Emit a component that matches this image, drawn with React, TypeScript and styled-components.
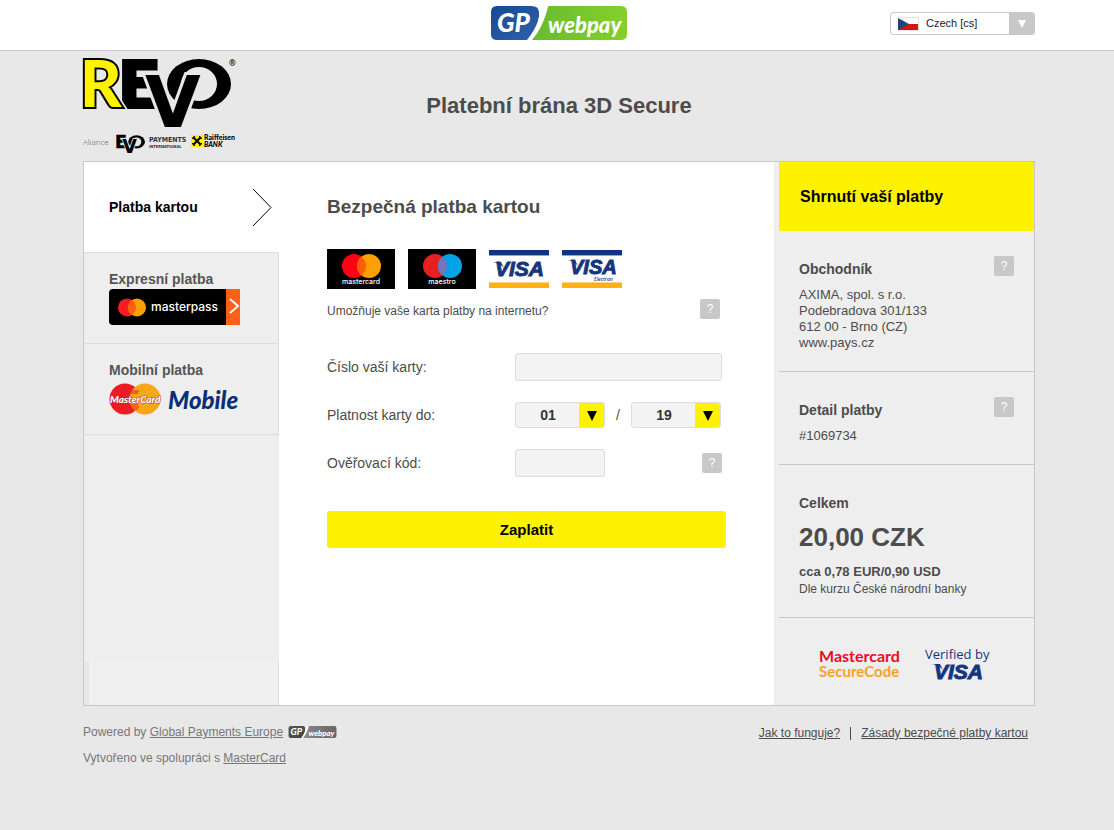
import React from "react";
import styled, { createGlobalStyle } from "styled-components";

const GlobalStyle = createGlobalStyle`
  * { box-sizing: border-box; }
  body {
    margin: 0;
    background: #e8e8e8;
    color: #4c4c4c;
    font-family: "Liberation Sans", Arial, Helvetica, sans-serif;
    font-size: 13px;
    line-height: 16px;
  }
  h1, h2, h3, p { margin: 0; }
  button, input, select { font-family: inherit; color: inherit; }
  svg { display: block; overflow: visible; }
`;

const Container = styled.div`
  max-width: 952px;
  margin: 0 auto;
`;

const Page = styled.div`
  padding-left: 4px;
`;

const TopBar = styled.div`
  background: #fff;
  border-bottom: 1px solid #c8c8c8;
  padding-left: 4px;
`;

const TopBarInner = styled(Container)`
  height: 50px;
  display: grid;
  grid-template-columns: 1fr auto 1fr;
  align-items: center;
  padding-bottom: 4px;
`;

const LanguageBox = styled.label`
  grid-column: 3;
  justify-self: end;
  width: 145px;
  height: 23px;
  display: grid;
  grid-template-columns: 35px 1fr 25px;
  align-items: center;
  border: 1px solid #c8c8c8;
  border-radius: 3px;
  background: #fff;
  overflow: hidden;
`;

const FlagSlot = styled.span`
  grid-area: 1 / 1;
  padding: 1px 0 0 7px;
  z-index: 1;
  pointer-events: none;
`;

const LanguageSelect = styled.select`
  grid-area: 1 / 1 / 2 / 4;
  width: 100%;
  height: 21px;
  appearance: none;
  border: 0;
  background: transparent;
  padding: 0 26px 0 35px;
  font-size: 11px;
  color: #222;
`;

const SelectArrow = styled.span<{ $bg: string; $color: string }>`
  align-self: stretch;
  display: flex;
  align-items: center;
  justify-content: center;
  padding-top: 2px;
  background: ${(p) => p.$bg};
  color: ${(p) => p.$color};
  pointer-events: none;
  z-index: 1;
`;

const LanguageArrow = styled(SelectArrow)`
  grid-area: 1 / 3;
`;

const Header = styled(Container)`
  height: 110px;
  display: grid;
  grid-template-columns: 1fr auto 1fr;
  padding-top: 7px;
`;

const PageTitle = styled.h1`
  font-size: 22px;
  line-height: 26px;
  padding-top: 35px;
`;

const Panel = styled(Container)`
  display: grid;
  grid-template-columns: 195px 1fr 260px;
  border: 1px solid #c8c8c8;
  background: #fff;
`;

const Nav = styled.nav`
  display: flex;
  flex-direction: column;
  background: #eee;
`;

const ActiveMethod = styled.button`
  height: 90px;
  display: flex;
  align-items: center;
  justify-content: space-between;
  border: 0;
  background: #fff;
  padding: 0 6px 0 25px;
  font-size: 14px;
  font-weight: bold;
  color: #000;
`;

const Method = styled.button<{ $last?: boolean }>`
  display: flex;
  flex-direction: column;
  align-items: flex-start;
  gap: 1px;
  border: 0 solid #ddd;
  border-width: 1px 1px ${(p) => (p.$last ? "1px" : "0")} 0;
  background: #eee;
  padding: 17px 25px 18px;
  font-size: 14px;
  line-height: 18px;
  font-weight: bold;
  color: #555;
`;

const NavFoot = styled.div`
  margin-top: auto;
  height: 44px;
  background: #f0f0f0;
  border-left: 5px solid #e8e8e8;
  border-right: 1px solid #ddd;
`;

const Main = styled.main`
  padding: 33px 48px;
`;

const SectionTitle = styled.h2`
  font-size: 19px;
  line-height: 24px;
`;

const Cards = styled.div`
  display: flex;
  align-items: center;
  gap: 13px;
  margin-top: 30px;
`;

const Question = styled.div`
  display: flex;
  align-items: flex-end;
  justify-content: space-between;
  margin-top: 10px;
  padding-right: 6px;
  font-size: 12px;
`;

const Help = styled.button`
  width: 20px;
  height: 20px;
  flex: none;
  border: 0;
  border-radius: 2px;
  padding: 0;
  background: #c8c8c8;
  color: #fff;
  font-size: 12px;
  line-height: 20px;
`;

const Form = styled.form`
  display: flex;
  flex-direction: column;
  gap: 20px;
  margin-top: 34px;
`;

const Row = styled.div`
  display: grid;
  grid-template-columns: 188px 1fr;
  align-items: center;
  min-height: 28px;
  padding-right: 4px;
  font-size: 14px;
`;

const Controls = styled.div`
  display: flex;
  align-items: center;
`;

const Field = styled.input<{ $short?: boolean }>`
  width: ${(p) => (p.$short ? "90px" : "100%")};
  height: 28px;
  border: 1px solid #ddd;
  border-radius: 3px;
  background: #f3f3f3;
  padding: 0 8px;
  font-size: 14px;
`;

const DateBox = styled.span`
  width: 90px;
  height: 26px;
  display: grid;
  grid-template-columns: 1fr 25px;
  border: 1px solid #ddd;
  border-radius: 3px;
  background: #f3f3f3;
  overflow: hidden;
`;

const DateSelect = styled.select`
  grid-area: 1 / 1 / 2 / 3;
  height: 24px;
  appearance: none;
  border: 0;
  background: transparent;
  padding: 0 24px 0 0;
  text-align-last: center;
  font-size: 14px;
  font-weight: bold;
  color: #333;
`;

const DateArrow = styled(SelectArrow)`
  grid-area: 1 / 2;
`;

const Slash = styled.span`
  width: 26px;
  text-align: center;
`;

const Spacer = styled.span`
  flex: 1;
`;

const PayButton = styled.button`
  height: 37px;
  margin-top: 14px;
  border: 0;
  border-radius: 3px;
  background: #fff200;
  color: #000;
  font-size: 15px;
  font-weight: bold;
`;

const Summary = styled.aside`
  background: #eee;
  padding-left: 5px;
`;

const SummaryHead = styled.h2`
  height: 69px;
  display: flex;
  align-items: center;
  padding-left: 21px;
  background: #fff200;
  color: #000;
  font-size: 16px;
`;

const SummaryBlock = styled.section`
  display: grid;
  grid-template-columns: 1fr auto;
  row-gap: 9px;
  padding: 25px 20px 20px;
  border-bottom: 1px solid #c8c8c8;
`;

const BlockTitle = styled.h3`
  font-size: 14px;
  line-height: 18px;
  padding-top: 4px;
`;

const BlockBody = styled.div`
  grid-column: 1 / 3;
`;

const Amount = styled.div`
  font-size: 26px;
  line-height: 32px;
  font-weight: bold;
  margin-bottom: 10px;
`;

const Approx = styled.div`
  font-weight: bold;
  line-height: 18px;
`;

const RateNote = styled.div`
  font-size: 12px;
`;

const Badges = styled.div`
  display: flex;
  gap: 22px;
  padding: 25px 20px 22px 39px;
`;

const Footer = styled(Container)`
  display: flex;
  justify-content: space-between;
  padding: 13px 7px 0 0;
  font-size: 12px;
  line-height: 26px;
  color: #777;
`;

const FooterLine = styled.p`
  display: flex;
  align-items: center;
  white-space: pre;

  svg { margin-left: 5px; }
`;

const Link = styled.a`
  color: inherit;
  text-decoration: underline;
`;

const FooterLinks = styled.div`
  display: flex;
  height: 28px;
  align-items: center;
  gap: 10px;
  color: #4c4c4c;
`;

const Divider = styled.span`
  width: 1px;
  height: 13px;
  background: #4c4c4c;
`;

const sans = "Open Sans";
const narrow = "Liberation Sans Narrow, DejaVu Sans Condensed";

function Triangle({ size }: { size: number }) {
  return (
    <svg width={size} height={size} viewBox="0 0 10 10" fill="currentColor" aria-hidden="true">
      <path d="M0 0H10L5 10Z" />
    </svg>
  );
}

function GpWebpay({ width, grey }: { width: number; grey?: boolean }) {
  const id = grey ? "grey" : "colour";
  return (
    <svg width={width} height={Math.round(width / 4)} viewBox="0 0 136 34" role="img" aria-label="GP webpay">
      <defs>
        <linearGradient id={`${id}-left`} x1="0" y1="0" x2="1" y2="1">
          <stop offset="0" stopColor={grey ? "#555" : "#164a8f"} />
          <stop offset="1" stopColor={grey ? "#444" : "#2f62ad"} />
        </linearGradient>
        <linearGradient id={`${id}-right`} x1="0" y1="0" x2="1" y2="0">
          <stop offset="0" stopColor={grey ? "#8a8a8a" : "#68bb30"} />
          <stop offset="1" stopColor={grey ? "#666" : "#84d02a"} />
        </linearGradient>
      </defs>
      <rect width="136" height="34" rx="5" fill="#fff" />
      <path d="M57 0H130Q136 0 136 6V28Q136 34 130 34H41Q52 22 57 0Z" fill={`url(#${id}-right)`} />
      <path d="M6 0H40Q52 0 47 15Q44 24 36 34H6Q0 34 0 28V6Q0 0 6 0Z" fill={`url(#${id}-left)`} />
      <path d="M46 0H57Q53 21 37 34Q53 12 46 0Z" fill="#fff" />
      <g fill="#fff" fontFamily="Lato" fontStyle="italic">
        <text x="6" y="26" fontSize="26" fontWeight="900">GP</text>
        <text x="57" y="27" fontSize="22" fontWeight="900">webpay</text>
      </g>
    </svg>
  );
}

function CzechFlag() {
  return (
    <svg width="21" height="14" viewBox="0 0 21 14" aria-hidden="true">
      <rect width="21" height="14" fill="#e4e4e4" />
      <rect y="1" width="20" height="6" fill="#fff" />
      <rect y="7" width="20" height="6" fill="#d7141a" />
      <path d="M0 1L11 7L0 13Z" fill="#1f437c" />
    </svg>
  );
}

function EvoMark({ ground }: { ground: string }) {
  return (
    <>
      <text x="34" y="50" fontFamily="DejaVu Sans" fontWeight="700" fontSize="66" stroke="#000" strokeWidth="2">E</text>
      <ellipse cx="116" cy="26" rx="32" ry="25" />
      <ellipse cx="116" cy="26" rx="18" ry="17" fill={ground} />
      <text x="62" y="69" fontFamily="DejaVu Sans" fontWeight="700" fontSize="72" stroke={ground} strokeWidth="6" paintOrder="stroke">V</text>
    </>
  );
}

function RevoLogo() {
  return (
    <svg width="155" height="98" viewBox="0 0 155 98" role="img" aria-label="REVO">
      <EvoMark ground="#e8e8e8" />
      <g filter="drop-shadow(2px 0 0 #e8e8e8)">
        <text x="-3" y="49" fontFamily="Lato" fontWeight="900" fontSize="64" fill="#fff200" stroke="#000" strokeWidth="4" paintOrder="stroke">R</text>
      </g>
      <text x="146" y="8" fontFamily={sans} fontWeight="700" fontSize="8">®</text>
      <text x="0" y="87" fontFamily={sans} fontWeight="300" fontSize="8" fill="#555">Aliance</text>
      <svg x="32" y="77" width="30" height="19" viewBox="34 0 114 72">
        <EvoMark ground="#e8e8e8" />
      </svg>
      <text x="66" y="84" fontFamily={narrow} fontWeight="700" fontSize="7" fill="#333">PAYMENTS</text>
      <text x="66" y="90" fontFamily={narrow} fontWeight="700" fontSize="4" fill="#333">INTERNATIONAL</text>
      <rect x="108" y="77" width="12" height="12" fill="#fff200" />
      <path d="M110 79L118 87M118 79L110 87" stroke="#000" strokeWidth="2" />
      <path d="M109 81L112 78M119 81L116 78M109 85L112 88M119 85L116 88" stroke="#000" strokeWidth="1" />
      <g fontFamily="Lato" fontWeight="900" fontSize="7">
        <text x="121" y="82">Raiffeisen</text>
        <text x="121" y="89" fontStyle="italic">BANK</text>
      </g>
    </svg>
  );
}

function Overlap({ cx, cy, r, gap, left, right, mid }: { cx: number; cy: number; r: number; gap: number; left: string; right: string; mid: string }) {
  const h = Math.sqrt(r * r - gap * gap);
  return (
    <>
      <circle cx={cx - gap} cy={cy} r={r} fill={left} />
      <circle cx={cx + gap} cy={cy} r={r} fill={right} />
      <path d={`M${cx} ${cy - h}A${r} ${r} 0 0 1 ${cx} ${cy + h}A${r} ${r} 0 0 1 ${cx} ${cy - h}Z`} fill={mid} />
    </>
  );
}

function CircleCard({ name, left, right, mid }: { name: string; left: string; right: string; mid: string }) {
  return (
    <svg width="68" height="40" viewBox="0 0 68 40" role="img" aria-label={name}>
      <rect width="68" height="40" />
      <Overlap cx={34.5} cy={17} r={12} gap={7.5} left={left} right={right} mid={mid} />
      <text x="34" y="35" textAnchor="middle" fontFamily="Inter" fontWeight="500" fontSize="7" fill="#fff">{name}</text>
    </svg>
  );
}

function VisaText({ x, y, size = 21 }: { x: number; y: number; size?: number }) {
  return (
    <text x={x} y={y} fontFamily="Liberation Sans" fontStyle="italic" fontWeight="700" fontSize={size} fill="#16357f" stroke="#16357f" strokeWidth="1">VISA</text>
  );
}

function VisaCard({ electron }: { electron?: boolean }) {
  return (
    <svg width="60" height="38" viewBox="0 0 60 38" role="img" aria-label={electron ? "Visa Electron" : "Visa"}>
      <rect width="60" height="38" fill="#fff" />
      <rect width="60" height="6" fill="#9aa5c5" />
      <rect width="60" height="5" fill="#10357f" />
      <rect y="32" width="60" height="6" fill="#fdd384" />
      <rect y="33" width="60" height="5" fill="#fdb018" />
      <path d={electron ? "M6 10H13L16 16Q12 11 6 10Z" : "M4 12H12L15 18Q11 13 4 12Z"} fill="#16357f" />
      <VisaText x={electron ? 8 : 6} y={electron ? 24 : 26} size={electron ? 20 : 21} />
      {electron && <text x="32" y="31" fontFamily={sans} fontStyle="italic" fontWeight="600" fontSize="5" fill="#16357f">Electron</text>}
    </svg>
  );
}

function Masterpass() {
  return (
    <svg width="131" height="36" viewBox="0 0 131 36" role="img" aria-label="masterpass">
      <path d="M4 0H117V36H4Q0 36 0 32V4Q0 0 4 0Z" />
      <rect x="117" width="14" height="36" fill="#ff5f16" />
      <Overlap cx={23} cy={18.5} r={9} gap={5} left="#ff1a22" right="#ff9f00" mid="#ff5f16" />
      <text x="42" y="22" fontFamily="Inter" fontWeight="500" fontSize="12" fill="#fff">masterpass</text>
      <path d="M121 10L129 17L121 24" fill="none" stroke="#fff" strokeWidth="2" />
    </svg>
  );
}

function MastercardMobile() {
  return (
    <svg width="131" height="36" viewBox="0 0 131 36" role="img" aria-label="MasterCard Mobile">
      <circle cx="16" cy="19" r="15.5" fill="#ed1c24" />
      <circle cx="36" cy="19" r="15.5" fill="#faa61a" />
      <path d="M22 11H30M21 13H29M22 25H29M23 27H30M24 29H29" stroke="#ed1c24" />
      <text x="1" y="23" fontFamily="Lato" fontStyle="italic" fontWeight="900" fontSize="10" fill="#fff" stroke="#a33" strokeWidth="1" paintOrder="stroke">MasterCard</text>
      <text x="59" y="29" fontFamily="Lato" fontStyle="italic" fontWeight="900" fontSize="24" fill="#0a2f7a">Mobile</text>
    </svg>
  );
}

function SecureCode() {
  return (
    <svg width="84" height="40" viewBox="0 0 84 40" role="img" aria-label="Mastercard SecureCode">
      <text x="1" y="19" fontFamily="Lato" fontWeight="700" fontSize="16" fill="#eb0a28">Mastercard</text>
      <text x="1" y="34" fontFamily="Lato" fontWeight="700" fontSize="15" fill="#f8a21f">SecureCode</text>
    </svg>
  );
}

function VerifiedByVisa() {
  return (
    <svg width="66" height="40" viewBox="0 0 66 40" role="img" aria-label="Verified by Visa">
      <text x="1" y="16" fontFamily={sans} fontSize="13" fill="#16357f">Verified by</text>
      <path d="M8 21H16L19 27Q15 22 8 21Z" fill="#16357f" />
      <VisaText x={10} y={36} size={21} />
    </svg>
  );
}

function DatePart({ label, value }: { label: string; value: string }) {
  return (
    <DateBox>
      <DateSelect aria-label={label} defaultValue={value}>
        <option>{value}</option>
      </DateSelect>
      <DateArrow $bg="#fff200" $color="#000">
        <Triangle size={10} />
      </DateArrow>
    </DateBox>
  );
}

export default function App() {
  return (
    <>
      <GlobalStyle />
      <TopBar>
        <TopBarInner>
          <span />
          <GpWebpay width={136} />
          <LanguageBox>
            <FlagSlot>
              <CzechFlag />
            </FlagSlot>
            <LanguageSelect aria-label="Jazyk" defaultValue="cs">
              <option value="cs">Czech [cs]</option>
            </LanguageSelect>
            <LanguageArrow $bg="#c8c8c8" $color="#fff">
              <Triangle size={8} />
            </LanguageArrow>
          </LanguageBox>
        </TopBarInner>
      </TopBar>

      <Page>
        <Header as="header">
          <RevoLogo />
          <PageTitle>Platební brána 3D Secure</PageTitle>
        </Header>

        <Panel>
          <Nav>
            <ActiveMethod type="button">
              Platba kartou
              <svg width="21" height="38" viewBox="0 0 21 38" fill="none" stroke="#000" aria-hidden="true">
                <path d="M1 1L19 19.5L1 38" />
              </svg>
            </ActiveMethod>
            <Method type="button">
              Expresní platba
              <Masterpass />
            </Method>
            <Method type="button" $last>
              Mobilní platba
              <MastercardMobile />
            </Method>
            <NavFoot />
          </Nav>

          <Main>
            <SectionTitle>Bezpečná platba kartou</SectionTitle>
            <Cards>
              <CircleCard name="mastercard" left="#ff0015" right="#ff9f00" mid="#ff5f00" />
              <CircleCard name="maestro" left="#e5201f" right="#00a2e5" mid="#7673c0" />
              <VisaCard />
              <VisaCard electron />
            </Cards>
            <Question>
              Umožňuje vaše karta platby na internetu?
              <Help type="button">?</Help>
            </Question>
            <Form onSubmit={(e) => e.preventDefault()}>
              <Row>
                <label htmlFor="card">Číslo vaší karty:</label>
                <Field id="card" />
              </Row>
              <Row>
                <span>Platnost karty do:</span>
                <Controls>
                  <DatePart label="Měsíc" value="01" />
                  <Slash>/</Slash>
                  <DatePart label="Rok" value="19" />
                </Controls>
              </Row>
              <Row>
                <label htmlFor="code">Ověřovací kód:</label>
                <Controls>
                  <Field id="code" $short />
                  <Spacer />
                  <Help type="button">?</Help>
                </Controls>
              </Row>
              <PayButton type="submit">Zaplatit</PayButton>
            </Form>
          </Main>

          <Summary>
            <SummaryHead>Shrnutí vaší platby</SummaryHead>
            <SummaryBlock>
              <BlockTitle>Obchodník</BlockTitle>
              <Help type="button">?</Help>
              <BlockBody>
                AXIMA, spol. s r.o.
                <br />
                Podebradova 301/133
                <br />
                612 00 - Brno (CZ)
                <br />
                www.pays.cz
              </BlockBody>
            </SummaryBlock>
            <SummaryBlock>
              <BlockTitle>Detail platby</BlockTitle>
              <Help type="button">?</Help>
              <BlockBody>#1069734</BlockBody>
            </SummaryBlock>
            <SummaryBlock>
              <BlockTitle>Celkem</BlockTitle>
              <BlockBody>
                <Amount>20,00 CZK</Amount>
                <Approx>cca 0,78 EUR/0,90 USD</Approx>
                <RateNote>Dle kurzu České národní banky</RateNote>
              </BlockBody>
            </SummaryBlock>
            <Badges>
              <SecureCode />
              <VerifiedByVisa />
            </Badges>
          </Summary>
        </Panel>

        <Footer as="footer">
          <div>
            <FooterLine>
              Powered by <Link href="#gpe">Global Payments Europe</Link>
              <GpWebpay width={49} grey />
            </FooterLine>
            <FooterLine>
              Vytvořeno ve spolupráci s <Link href="#mastercard">MasterCard</Link>
            </FooterLine>
          </div>
          <FooterLinks>
            <Link href="#how">Jak to funguje?</Link>
            <Divider />
            <Link href="#rules">Zásady bezpečné platby kartou</Link>
          </FooterLinks>
        </Footer>
      </Page>
    </>
  );
}
